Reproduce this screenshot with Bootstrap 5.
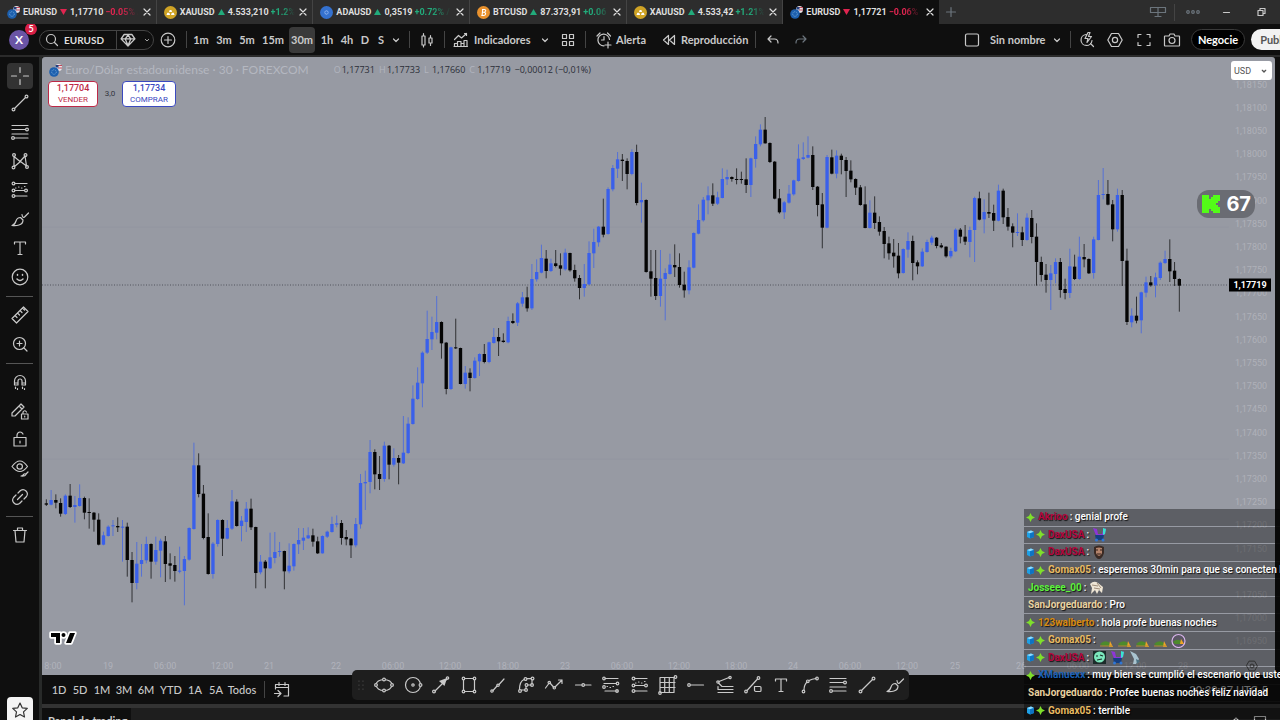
<!DOCTYPE html>
<html lang="es">
<head>
<meta charset="utf-8">
<meta name="viewport" content="width=device-width, initial-scale=1">
<title>EURUSD 1,17721</title>
<link href="https://cdn.jsdelivr.net/npm/bootstrap@5.3.0/dist/css/bootstrap.min.css" rel="stylesheet">
<style>
:root{--ink:#0f0f0f;--panel:#1e1e1e;--fg:#c9c9c9;--chart:#979aa3}
body{font-family:Roboto,"Open Sans",sans-serif;background:var(--ink);color:var(--fg);font-size:10px;line-height:14px}
button,select{font:inherit;color:inherit;background:none;border:0;padding:0}
.ic{width:24px;height:24px;fill:none;stroke:currentColor;stroke-width:1.2;stroke-linecap:round;stroke-linejoin:round;flex:none;display:block}
.ic .f{fill:currentColor;stroke:none}
/* window tabs */
.tabbar{height:24px;background:#2d2d2d}
.tabset{flex:0 1 939px;min-width:0}
.wtab{flex:1 1 0;min-width:0;font-size:9px;font-weight:700;color:#dedede;padding:0 2px 0 7px;border-right:1px solid #444;white-space:nowrap}
.wtab.on{background:var(--ink);border:0}
.coin{width:13px;height:13px;flex:none;margin-right:3px}
.tri{width:7px;height:6px;flex:none;margin:0 3px}
.pct{flex:1 1 0;min-width:0;overflow:hidden;margin-left:2px;-webkit-mask-image:linear-gradient(90deg,#000 45%,transparent 96%);mask-image:linear-gradient(90deg,#000 45%,transparent 96%)}
.up{color:#22ab7b}.dn{color:#e02550}
.closer{width:14px}
.closer .ic{width:14px;height:14px}
/* main toolbar */
.topbar{height:33px;border-bottom:2px solid #2b2b2b;font-size:11px;font-weight:700;font-family:Lato,Roboto,sans-serif;white-space:nowrap;overflow:hidden}
.tool{display:flex;align-items:center;justify-content:center;height:26px;flex:none;border-radius:4px}
.tool.start{justify-content:flex-start}
.tool.on{background:#3a3a3a;margin:0 1px}
.w14{width:14px}.w16{width:16px}.w18{width:18px}.w20{width:20px}.w22{width:22px}.w24{width:24px}.w26{width:26px}.w28{width:28px}.w30{width:30px}.w41{width:41px}.w58{width:58px}.w70{width:70px}
.sep{flex:none;display:flex;justify-content:center}
.sep::before{content:"";width:1px;height:17px;background:#444}
.s8{width:8px}.s10{width:10px}.s14{width:14px}
.avatar{width:20px;height:20px;border-radius:50%;background:#6a54a5;color:#fff;font-size:12px;margin:0 10px 0 9px}
.count{top:-7px;left:16px;width:12px;height:12px;border-radius:50%;background:#d81e45;font-size:9px;line-height:12px}
.search{width:115px;height:20px;border:1px solid #444;border-radius:10px}
.search input{width:52px;background:none;border:0;color:#dedede;font:inherit;font-size:10px;padding:0}
.split{border-left:1px solid #444;height:18px;width:40px}
.trade{width:54px;height:21px;border:1px solid #3a3a3a;border-radius:11px;background:#000;color:#fff;margin-left:5px}
.publish{width:58px;height:21px;border-radius:11px;background:#f2f2f2;color:#555;margin-left:6px;flex:none}
.rightset{flex:none;width:320px}
/* drawing rail */
.rail{width:42px;flex:none;border-right:3px solid #282a29;padding-top:6px}
.rail .grp{display:flex;flex-direction:column;align-items:center}
.rail .grp button{flex:1 1 0;width:26px;display:flex;align-items:center;justify-content:center;border-radius:4px}
.rail .grp button.on{background:#333;flex:0 0 26px}
.g8{height:228px}.g2{height:57px}.g5{height:143px}.g1{height:28px}
.rail hr{width:27px;height:1px;margin:5px auto 4px;border:0;background:#555;opacity:1}
.star{width:26px;height:26px;border-radius:4px;background:#f4f4f4;color:#333;margin:0 auto -3px;flex:none}
/* chart */
.chart{background:var(--chart);margin-right:5px;border-radius:3px 3px 0 0}
.chart .plot{width:100%;height:100%;display:block;position:absolute;inset:0}
.legend{left:7px;top:5px;height:16px;font:500 9px/14px "Open Sans",sans-serif}
.legend .ttl{font:12px/14px Lato,sans-serif;color:#b4b7c0;margin:0 25px 0 0}
.legend .v{color:#2b2e38;margin-right:4px}
.legend .k{color:#b2b5bf;width:8px}
.quote{left:6px;top:24px}
.quote button{height:26px;background:#fff;border-radius:4px;border:1px solid;line-height:11px;font-size:8px}
.quote button b{display:block;font-size:9px;font-weight:500}
.sell{color:#bd2946;width:50px}.buy{color:#3a49bf;width:54px}
.quote span{width:24px;font-size:8px;color:#33363f}
.scale{right:1px;top:16px;bottom:22px;width:46px;color:#afb1b9;font-size:9px}
.scale span{flex:1 1 0;display:flex;align-items:center;justify-content:center}
.times{left:0;right:0;bottom:2px;height:14px;color:#b0b2bb;font-size:9px;overflow:hidden}
.times span{position:absolute;transform:translateX(-50%)}
.last{right:4px;transform:translateY(-50%);width:42px;height:13px;line-height:13px;background:#000;color:#fff;font-weight:700;font-size:9px}
.cur{right:3px;top:4px;width:41px;height:19px;background:#fff;border-radius:3px;color:#555;font-size:9px}
.cur select{appearance:none;width:100%;height:100%;padding-left:3px}
.cur .ic{right:0;top:2px;width:16px;height:16px;stroke-width:2;pointer-events:none}
.viewers{right:20px;top:133px;width:58px;height:28px;border-radius:12px;background:#6a6c73;color:#fff;font:700 20px Inter,sans-serif}
.tvlogo{left:6px;bottom:28px;width:29px;height:18px}
.gear{right:14px;bottom:-3px;color:#444}
.gear .ic{width:18px;height:24px}
/* bottom */
.ranges{height:29px;font-size:11px;font-weight:500;font-family:Lato,Roboto,sans-serif;padding-left:7px}
.clock{color:#aaa;margin-right:12px;font-size:11px}
.under{height:16px;border-top:4px solid #333;background:var(--panel);overflow:hidden}
.under button{height:24px}
.under .dock{width:89px;background:var(--ink);font:700 11px Lato,sans-serif;padding-left:6px;color:#ccc}
.favs{left:352px;bottom:20px;width:557px;height:30px;background:var(--panel);border-radius:5px}
.favs button{flex:1 1 0;display:flex;justify-content:center}
.favs .grip{width:18px;color:#555}
/* live chat */
.chat{right:0;bottom:0;width:256px;height:211px;color:#fff;font-weight:500;font-size:10px;overflow:hidden;text-shadow:1px 1px 1px rgba(0,0,0,.8)}
.chat li{flex:1 1 0;min-height:0;display:flex;align-items:center;white-space:nowrap;background:rgba(0,0,0,.38);border-bottom:1px solid transparent;background-clip:padding-box;padding-left:2px}
.chat .ic{width:9px;height:9px;stroke:none;margin-right:1px}
.chat .who{margin-left:2px;font-weight:700}
.chat .who+span{margin-left:2px}
.chat .emo{width:15px;height:15px;flex:none;margin-left:3px}
.red{color:#b3063f}.gold{color:#e8bb62}.lime{color:#5cf23c}.cream{color:#e9d2a0}.orange{color:#d78a10}.azure{color:#1b62b8}
</style>
</head>
<body class="vh-100 overflow-hidden d-flex flex-column position-relative">

<svg class="d-none" aria-hidden="true">
 <symbol id="x" viewBox="0 0 14 14"><path d="M4 4l6 6M10 4l-6 6"/></symbol>
 <symbol id="chev" viewBox="0 0 24 24"><path d="M9.500 11l2.500 2.500L14.500 11"/></symbol>
 <symbol id="search" viewBox="0 0 24 24"><circle cx="11" cy="11" r="4.500"/><path d="M14.500 14.500L17.500 17.500"/></symbol>
 <symbol id="gem" viewBox="2 2 20 20"><path d="M8.500 7h7l2.800 4-6.300 6.500L5.700 11zM6 11h12M9.500 11l2.500 6 2.500-6-2.500-3.500z"/></symbol>
 <symbol id="plus" viewBox="0 0 24 24"><circle cx="12" cy="12" r="6.800"/><path d="M12 8.500v7M8.500 12h7"/></symbol>
 <symbol id="add" viewBox="0 0 24 24"><path d="M12 7.500v9M7.500 12h9"/></symbol>
 <symbol id="candles" viewBox="0 0 24 24"><path d="M7 8h3v9H7zM8.500 5.500V8M8.500 17v2M14 10h3v5h-3zM15.500 7.500V10M15.500 15v2.500"/></symbol>
 <symbol id="ind" viewBox="0 0 24 24"><path d="M5.500 18.500v-3h3v3M8.500 18.500v-5h3.500v5M12 18.500v-3h3v3M15 18.500v-6h3v6M5 18.500h13.500M5.500 11.500l4-4 3 2.500 5-4.500M15.500 5.500h2v2"/></symbol>
 <symbol id="grid4" viewBox="0 0 24 24"><path d="M6.500 6.500h4v4h-4zM13.500 6.500h4v4h-4zM6.500 13.500h4v4h-4zM13.500 13.500h4v4h-4z"/></symbol>
 <symbol id="alarm" viewBox="0 0 24 24"><path d="M17.500 11.500A5.800 5.800 0 1 0 12 17.800M12 8.500V12H9.500M5 8l3-3M15.500 5l3 3M16 14v6M13 17h6"/></symbol>
 <symbol id="replay" viewBox="0 0 24 24"><path d="M11.500 7.500v9L6.500 12zM17.500 7.500v9L12.500 12z"/></symbol>
 <symbol id="undo" viewBox="0 0 24 24"><path d="M10 8l-3 3 3 3M7 11h6.500q3.500 0 3.500 4"/></symbol>
 <symbol id="redo" viewBox="0 0 24 24"><path d="M14 8l3 3-3 3M17 11h-6.500Q7 11 7 15"/></symbol>
 <symbol id="square" viewBox="0 0 24 24"><rect x="5.500" y="6" width="13" height="12" rx="1.500"/></symbol>
 <symbol id="quick" viewBox="0 0 24 24"><path d="M11 6.500a5.500 5.500 0 1 0 6 6M15.500 15.500l3 3M13 4.500l-3 6h3l-1 4 4.500-6h-3l1.500-4z"/></symbol>
 <symbol id="hexset" viewBox="0 0 24 24"><path d="M8.500 5.500h7l3.700 6.500-3.700 6.500h-7L4.800 12z"/><circle cx="12" cy="12" r="2.600"/></symbol>
 <symbol id="full" viewBox="0 0 24 24"><path d="M6 9.500V6.500h3M15 6.500h3v3M18 14.500v3h-3M9 17.500H6v-3"/></symbol>
 <symbol id="cam" viewBox="0 0 24 24"><path d="M5 8h4l1-2h4l1 2h4q.5 0 .5.500v9q0 .5-.5.500H5q-.5 0-.5-.5v-9Q4.500 8 5 8z"/><circle cx="12" cy="12.500" r="3"/></symbol>
 <symbol id="cross" viewBox="0 0 24 24"><path d="M12 3.500v5M12 15.500v5M3.500 12h5M15.500 12h5"/></symbol>
 <symbol id="line" viewBox="0 0 24 24"><path d="M6.500 17.500l11-11"/><circle cx="5.500" cy="18.500" r="1.400"/><circle cx="18.500" cy="5.500" r="1.400"/></symbol>
 <symbol id="lines" viewBox="0 0 24 24"><path d="M4 5.500h16M4 9.500h13.500M4 14h16M6.500 18h13.500"/><circle cx="19" cy="9.500" r="1.400"/><circle cx="5" cy="18" r="1.400"/></symbol>
 <symbol id="xabcd" viewBox="0 0 24 24"><path d="M6 17V7.500l6 5 5-5.500 1.500 10-6-4.500L6.500 17.500"/><circle cx="6" cy="6" r="1.400"/><circle cx="5.500" cy="18.500" r="1.400"/><circle cx="17.500" cy="6" r="1.400"/><circle cx="19" cy="18" r="1.400"/></symbol>
 <symbol id="fibch" viewBox="0 0 24 24"><path d="M7 5.500h12M6.500 12.500h10M7 18h12M7.500 10h.5M10.500 9h.5M13.500 10h.5M16.500 8.500h.5"/><circle cx="5.500" cy="5.500" r="1.400"/><circle cx="5.500" cy="12.500" r="1.400"/><circle cx="5.500" cy="18" r="1.400"/><circle cx="18" cy="12.500" r="1.400"/></symbol>
 <symbol id="brush" viewBox="0 0 24 24"><path d="M4 18.500q3-1 4-4.500 1-3.500 4.500-3.500l2.500 2.500q0 4-4 5-3 1-7 .5M14 7.500q.5 4 2.500 2.500L20.500 6"/></symbol>
 <symbol id="txt" viewBox="0 0 24 24"><path d="M6.500 8V6h11v2M12 6v12M10 18.500h4"/></symbol>
 <symbol id="smile" viewBox="0 0 24 24"><circle cx="12" cy="12" r="7.800"/><path d="M9 14q3 3 6 0M9.500 9.500v.8M14.500 9.500v.8" stroke-width="1.500"/></symbol>
 <symbol id="ruler" viewBox="0 0 24 24"><path d="M4 15.500L15.500 4l4.500 4.500L8.500 20zM7 12.500l2 2M9.500 10l2 2M12 7.500l2 2M14.500 5l2 2"/></symbol>
 <symbol id="zoom" viewBox="0 0 24 24"><circle cx="11.500" cy="11.500" r="6"/><path d="M16 16l3 3M11.500 9v5M9 11.500h5"/></symbol>
 <symbol id="magnet" viewBox="0 0 24 24"><path d="M6.500 15v-4a5.500 5.500 0 0 1 11 0v4h-3.500v-4a2 2 0 0 0-4 0v4zM6.500 13H10M14 13h3.500M7.500 17v1.500M9.500 18.500v1M14.500 17v1.500M16.500 18.500v1"/></symbol>
 <symbol id="penlock" viewBox="0 0 24 24"><path d="M4 14L13 5l3 3-9 9H4zM11 7l3 3M13.500 15h6.500v5h-6.500zM15 15v-2q1.500-2.500 3.500 0M16.700 17v1"/></symbol>
 <symbol id="lock" viewBox="0 0 24 24"><path d="M6 10.500h12v8.500H6zM9 10.500V8q.5-3 3-3 2 0 3 2M12 14v2" /></symbol>
 <symbol id="eye" viewBox="0 0 24 24"><path d="M4 10.500q8-11 15.500 0-7.500 10-15.500 0z"/><circle cx="11.700" cy="10.500" r="2.700"/><path d="M13 20q2 0 2.500-1.500 1.500-1.500 2.500 0-1 2-5 1.500M18 18l2-2"/></symbol>
 <symbol id="link" viewBox="0 0 24 24"><path d="M10 8l2.500-2.500q3-2 5.500.5t.5 5.500L16 14M14 16l-2.500 2.500q-3 2-5.500-.5t-.5-5.500L8 10M9.500 14.500l5-5"/></symbol>
 <symbol id="trash" viewBox="0 0 24 24"><path d="M5.500 7.500h13M9.500 7V5h5v2M7 7.500l1 11.500h8l1-11.500"/></symbol>
 <symbol id="starr" viewBox="0 0 24 24"><path d="M12 5l2.200 4.800 5.100.6-3.800 3.500 1 5.100-4.500-2.500L7.500 19l1-5.100-3.800-3.500 5.100-.6z"/></symbol>
 <symbol id="ell" viewBox="0 0 24 24"><ellipse cx="12" cy="12" rx="8" ry="5.500"/><circle cx="12" cy="6.500" r="1.400" fill="#1e1e1e"/><circle cx="12" cy="17.500" r="1.400" fill="#1e1e1e"/><circle cx="4" cy="12" r="1.400" fill="#1e1e1e"/><circle cx="20" cy="12" r="1.400" fill="#1e1e1e"/></symbol>
 <symbol id="circ" viewBox="0 0 24 24"><circle cx="12" cy="12" r="7.500"/><circle cx="12" cy="12" r="1.200"/><circle cx="19.500" cy="12" r="1.400" fill="#1e1e1e"/></symbol>
 <symbol id="arrow" viewBox="0 0 24 24"><path d="M6 18l12-12"/><path d="M18 5l-2.500 8-5.500-5z" fill="currentColor" stroke="none"/><circle cx="5" cy="18.500" r="1.400"/><circle cx="18.500" cy="5" r="1.200"/></symbol>
 <symbol id="rct" viewBox="0 0 24 24"><path d="M6.500 7v10M17.500 7v10M8 5.500h8M8 18.500h8"/><circle cx="6.500" cy="5.500" r="1.300"/><circle cx="17.500" cy="5.500" r="1.300"/><circle cx="6.500" cy="18.500" r="1.300"/><circle cx="17.500" cy="18.500" r="1.300"/></symbol>
 <symbol id="info" viewBox="0 0 24 24"><path d="M7 17.500l4-4.500M13 11.500L18 6"/><circle cx="6" cy="18" r="1.200"/><circle cx="12" cy="12.300" r="1.200"/></symbol>
 <symbol id="pathx" viewBox="0 0 24 24"><path d="M10 6.500q-4.500 2-4.500 10M13 5.700h4M18 7v4M17 12h-3M12 13.500v2M11 17H7.500"/><circle cx="11.500" cy="6" r="1.400"/><circle cx="18.500" cy="5.500" r="1.400"/><circle cx="18" cy="12" r="1.400"/><circle cx="12.500" cy="12" r="1.400"/><circle cx="12" cy="17" r="1.400"/><circle cx="6" cy="18" r="1.400"/></symbol>
 <symbol id="zig" viewBox="0 0 24 24"><path d="M3.500 15l3-4M8 10l3.500 4M13 14l7-7M16.500 7H20v3.500"/><circle cx="7.300" cy="9.500" r="1.200"/><circle cx="12.300" cy="14.800" r="1.200"/></symbol>
 <symbol id="hline" viewBox="0 0 24 24"><path d="M4.500 12H11M13.500 12H20"/><circle cx="12.200" cy="12" r="1.300"/></symbol>
 <symbol id="fib2" viewBox="0 0 24 24"><path d="M6 5.500h13M5 10.500h12M6 18h13M8 13.500h.5M11 14.500h.5M14 13.500h.5"/><circle cx="5" cy="5.500" r="1.300"/><circle cx="18.500" cy="10.500" r="1.300"/><circle cx="5" cy="14" r="1.300"/><circle cx="18" cy="18" r="1.300"/></symbol>
 <symbol id="gann" viewBox="0 0 24 24"><path d="M4 4.500h14v15H4zM4 9.500h15M4 14.500h15M8.700 4.500v15M13.300 4.500v15"/><circle cx="19.500" cy="4" r="1.300"/><circle cx="4" cy="20" r="1.300"/></symbol>
 <symbol id="ray" viewBox="0 0 24 24"><path d="M6.500 12H19.500"/><circle cx="5" cy="12" r="1.300"/></symbol>
 <symbol id="fan" viewBox="0 0 24 24"><path d="M6 8.500l10-4M5.500 10l3.500 3.500h11M5 13.500v3h15M5 19.500h15"/><circle cx="5" cy="9" r="1.200"/><circle cx="17" cy="4.500" r="1.200"/></symbol>
 <symbol id="shp" viewBox="0 0 24 24"><path d="M6 17.500L16.500 6M13.500 13.500h5.500q1 0 1 1v3q0 1-1 1h-4q-1 0-1.500-1z"/><circle cx="5" cy="18.500" r="1.300"/><circle cx="17.500" cy="5" r="1.300"/></symbol>
 <symbol id="curve" viewBox="0 0 24 24"><path d="M6 17q0-5 3-8M11 7.500Q14 6 18 5.500"/><circle cx="5.500" cy="18.500" r="1.300"/><circle cx="9.800" cy="8.300" r="1.300"/><circle cx="19" cy="5.500" r="1.300"/></symbol>
 <symbol id="cal" viewBox="0 0 24 24"><path d="M5.500 11V6.500h13V18H14M5.500 9.500h13M9 4.500v3M15 4.500v3M4.500 15.500h6M8 12.500l3 3-3 3"/></symbol>
 <symbol id="mon" viewBox="0 0 24 24"><path d="M4.500 7.500h15v5h-15zM12 7.500v9M9 16.500h6"/></symbol>
 <symbol id="dots" viewBox="0 0 24 24"><circle cx="7" cy="12" r="1.300"/><circle cx="12" cy="12" r="1.300"/><circle cx="17" cy="12" r="1.300"/></symbol>
 <symbol id="eurus" viewBox="0 0 13 13"><circle cx="9.500" cy="3.500" r="3.500" fill="#e9e4e8"/><path d="M9 1.500h4M9 4h4" stroke="#c2495b" stroke-width="1.100"/><path d="M6.500 1h3v2.500h-3z" fill="#24407e"/><circle cx="5" cy="8" r="4.800" fill="#1c5fae"/><circle cx="5" cy="8" r="2.300" fill="none" stroke="#76a9d8" stroke-width=".9" stroke-dasharray="1 .8"/></symbol>
 <symbol id="gold" viewBox="0 0 13 13"><circle cx="6.500" cy="6.500" r="6.500" fill="#cfa325"/><path d="M5 6l.7-2h1.700l.7 2zM2.500 9l.8-2.300h2l.8 2.300zM7 9l.8-2.300h2l.8 2.300z" fill="#fff"/></symbol>
 <symbol id="ada" viewBox="0 0 13 13"><circle cx="6.500" cy="6.500" r="6.500" fill="#3471cf"/><circle cx="6.500" cy="6.500" r="1.700" fill="none" stroke="#bcd5ff" stroke-dasharray="1 .6"/></symbol>
 <symbol id="btc" viewBox="0 0 13 13"><circle cx="6.500" cy="6.500" r="6.500" fill="#e9922e"/><path d="M5 3.500h2.300q1.700.2 1.300 1.700-.3 1-1.600 1.100 1.800.1 1.600 1.700-.3 1.500-2 1.500H4.300M5.700 3.500l-.6 6M5.300 6.300h2" fill="none" stroke="#fff" stroke-width="1.100"/></symbol>
 <symbol id="spark" viewBox="0 0 9 9"><path d="M4.500 0L6 3l3 1.500L6 6 4.500 9 3 6 0 4.500 3 3z" fill="#7fe02b"/></symbol>
 <symbol id="cube" viewBox="0 0 9 9"><path d="M1 2l4-1.500L8 2v5L4 8.500 1 7z" fill="#1ea0e6"/><path d="M1 2l3 1.300L8 2 5 .5z" fill="#8fdcff"/><path d="M4 3.300L8 2v5L4 8.500z" fill="#0e74c4"/></symbol>
 <symbol id="e1" viewBox="0 0 15 15"><path d="M1 1l4 1 1 5h4l1-4 3-2-1 6-3 3H5L3 6z" fill="#8d35d8"/><path d="M11 1l3 1-1 5-2 1z" fill="#39e3d0"/><path d="M3 8h9l-1 5H4z" fill="#173f80"/><circle cx="4.500" cy="13" r="1.500" fill="#2f77d6"/><circle cx="11" cy="13" r="1.500" fill="#2f77d6"/></symbol>
 <symbol id="e2" viewBox="0 0 15 15"><path d="M2 2q5-3 10 0v6q-2 6-5 6T2 8z" fill="#3a2a24"/><path d="M4 3q3-1 6 0v5q-1 3-3 3T4 8z" fill="#b5846c"/><path d="M4 5h2M8 5h2M5 9h4" stroke="#33211b"/></symbol>
 <symbol id="e3" viewBox="0 0 15 15"><path d="M1 4q4-4 8-1l5 4-1 6-3-3-2 4-2-4-4 4 1-6z" fill="#efe6d5"/><path d="M3 5l6 1M5 8l6 1M8 3l4 5" stroke="#8a7560" stroke-width=".8"/></symbol>
 <symbol id="e4" viewBox="0 0 15 15"><path d="M1 11q5-5 10-1l1 3H4z" fill="#4d8a2c"/><path d="M11 8l3 6h-4z" fill="#f0a427"/><path d="M1 13h12" stroke="#b48b32"/></symbol>
 <symbol id="e7" viewBox="0 0 15 15"><circle cx="7.500" cy="8" r="6.500" fill="#5a5664" stroke="#d9b4ec" stroke-width="1.200"/><path d="M2 9q4-4 8-1l1 3H4z" fill="#4d8a2c"/><path d="M10 6l3 5h-4z" fill="#f0a427"/></symbol>
 <symbol id="e5" viewBox="0 0 15 15"><path d="M1 1h13v13H1z" fill="#1b2b2a"/><circle cx="7.500" cy="7" r="5.500" fill="#7be7bd"/><path d="M4 6h2M8 5l3 1M5 10l5-1" stroke="#1a2d2a" stroke-width="1.200"/></symbol>
 <symbol id="e6" viewBox="0 0 15 15"><path d="M2 1l6 3 3 5-3 5H5l1-5z" fill="#a9c3cf"/><path d="M8 9l4 2-3 3z" fill="#4b7384"/></symbol>
</svg>

<header class="tabbar d-flex flex-shrink-0">
 <nav class="tabset d-flex" id="tabs"></nav>
 <button class="tool w24 h-100 text-secondary" aria-label="Nueva pestaña"><svg class="ic"><use href="#add"/></svg></button>
 <div class="ms-auto d-flex align-items-center">
  <button class="tool w24 text-secondary" aria-label="Monitores"><svg class="ic"><use href="#mon"/></svg></button>
  <span class="sep s8"></span>
  <button class="tool w30 text-secondary" aria-label="Más"><svg class="ic"><use href="#dots"/></svg></button>
  <button class="tool w30 ms-1" aria-label="Minimizar"><svg class="ic" viewBox="0 0 24 24"><path d="M8.500 12.500h6"/></svg></button>
  <button class="tool w30 ms-1 me-1" aria-label="Restaurar"><svg class="ic" viewBox="0 0 24 24" stroke-width="1.500"><path d="M9 10.500h5v5H9zM11 10V8.500h5V13.500h-1.500"/></svg></button>
 </div>
</header>

<div class="topbar d-flex align-items-center flex-shrink-0">
 <button class="avatar position-relative flex-shrink-0">X<span class="count position-absolute">5</span></button>
 <div class="search d-flex align-items-center flex-shrink-0"><svg class="ic"><use href="#search"/></svg><input value="EURUSD" aria-label="Símbolo"><button class="split d-flex align-items-center" aria-label="Filtro"><svg class="ic w22"><use href="#gem"/></svg><svg class="ic w16"><use href="#chev"/></svg></button></div>
 <button class="tool w28" aria-label="Añadir"><svg class="ic"><use href="#plus"/></svg></button><span class="sep s8"></span>
 <button class="tool w22">1m</button><button class="tool w24">3m</button><button class="tool w22">5m</button><button class="tool w30">15m</button><button class="tool w26 on">30m</button><button class="tool w22">1h</button><button class="tool w18">4h</button><button class="tool w18">D</button><button class="tool w14">S</button><button class="tool w16"><svg class="ic"><use href="#chev"/></svg></button>
 <span class="sep s10"></span><button class="tool w26"><svg class="ic"><use href="#candles"/></svg></button><span class="sep s8"></span>
 <button class="tool w26"><svg class="ic"><use href="#ind"/></svg></button><button class="tool start w58">Indicadores</button><button class="tool w26"><svg class="ic"><use href="#chev"/></svg></button><button class="tool w20"><svg class="ic"><use href="#grid4"/></svg></button><span class="sep s14"></span>
 <button class="tool w24"><svg class="ic"><use href="#alarm"/></svg></button><button class="tool start w41">Alerta</button><button class="tool w24"><svg class="ic"><use href="#replay"/></svg></button><button class="tool start w70">Reproducción</button><span class="sep s8"></span>
 <button class="tool w28"><svg class="ic"><use href="#undo"/></svg></button><button class="tool w28 text-secondary"><svg class="ic"><use href="#redo"/></svg></button>
 <div class="rightset ms-auto d-flex align-items-center overflow-hidden">
  <button class="tool w30 start"><svg class="ic"><use href="#square"/></svg></button><button class="tool start w58">Sin nombre</button><button class="tool w18"><svg class="ic"><use href="#chev"/></svg></button><span class="sep s8"></span>
  <button class="tool w26"><svg class="ic"><use href="#quick"/></svg></button><button class="tool w30"><svg class="ic"><use href="#hexset"/></svg></button><button class="tool w28"><svg class="ic"><use href="#full"/></svg></button><button class="tool w28"><svg class="ic"><use href="#cam"/></svg></button>
  <button class="trade flex-shrink-0">Negocie</button><button class="publish">Publicar</button>
 </div>
</div>

<div class="d-flex flex-grow-1 overflow-hidden">
 <aside class="rail d-flex flex-column">
  <div class="grp g8" data-icons="cross line lines xabcd fibch brush txt smile"></div><hr>
  <div class="grp g2" data-icons="ruler zoom"></div><hr>
  <div class="grp g5" data-icons="magnet penlock lock eye link"></div><hr>
  <div class="grp g1" data-icons="trash"></div>
  <button class="star mt-auto d-flex align-items-center justify-content-center" aria-label="Favoritos"><svg class="ic"><use href="#starr"/></svg></button>
 </aside>
 <main class="flex-grow-1 d-flex flex-column overflow-hidden">
  <section class="chart flex-grow-1 position-relative">
   <svg class="plot" id="plot" viewBox="0 0 3699 1854" preserveAspectRatio="none"></svg>
   <div class="legend position-absolute d-flex align-items-center"><svg class="coin"><use href="#eurus"/></svg><span class="ttl">Euro/Dólar estadounidense · 30 · FOREXCOM</span><span class="k">O</span><span class="v">1,17731</span><span class="k">H</span><span class="v">1,17733</span><span class="k">L</span><span class="v">1,17660</span><span class="k">C</span><span class="v">1,17719</span><span class="v">−0,00012 (−0,01%)</span></div>
   <div class="quote position-absolute d-flex align-items-center text-center"><button class="sell"><b>1,17704</b>VENDER</button><span>3,0</span><button class="buy"><b>1,17734</b>COMPRAR</button></div>
   <div class="scale position-absolute d-flex flex-column" id="scale"></div>
   <div class="times position-absolute" id="times"></div>
   <div class="last position-absolute text-center" id="last">1,17719</div>
   <div class="cur position-absolute"><select aria-label="Moneda"><option>USD</option></select><svg class="ic position-absolute"><use href="#chev"/></svg></div>
   <div class="viewers position-absolute d-flex align-items-center justify-content-between px-1"><svg width="20" height="20" viewBox="0 0 20 20" fill="#53fc18"><path d="M1 1h7v4h2V3h2V1h7v6h-2v2h-2v2h2v2h2v6h-7v-2h-2v-2H8v4H1z"/></svg>67</div>
   <svg class="tvlogo position-absolute" viewBox="0 0 29 18"><g stroke="#fff" stroke-width="3.500" stroke-linejoin="round"><path d="M3 4h9v10H8V8H3zM18 14l4-10h5l-4 10z"/><circle cx="15.500" cy="6" r="2"/></g><path d="M3 4h9v10H8V8H3zM18 14l4-10h5l-4 10z"/><circle cx="15.500" cy="6" r="2"/></svg>
   <button class="gear position-absolute" aria-label="Ajustes"><svg class="ic"><use href="#hexset"/></svg></button>
  </section>
  <div class="ranges d-flex align-items-center flex-shrink-0">
   <button class="tool w20">1D</button><button class="tool w22">5D</button><button class="tool w22">1M</button><button class="tool w22">3M</button><button class="tool w22">6M</button><button class="tool w28">YTD</button><button class="tool w20">1A</button><button class="tool w22">5A</button><button class="tool w30">Todos</button><span class="sep s14"></span><button class="tool w22" aria-label="Ir a la fecha"><svg class="ic"><use href="#cal"/></svg></button>
   <button class="clock ms-auto">20:39:27 UTC-5</button>
  </div>
  <div class="under d-flex flex-shrink-0"><button class="dock text-start">Panel de trading</button>
   <button class="ms-auto" aria-label="Abrir panel"><svg class="ic" viewBox="0 0 24 24"><path d="M9 13l3-3 3 3"/></svg></button><button class="me-2" aria-label="Maximizar panel"><svg class="ic" viewBox="0 0 24 24"><path d="M6.500 8.500h11v9h-11z"/></svg></button></div>
 </main>
</div>

<div class="favs position-absolute d-flex align-items-center"><span class="grip d-flex justify-content-center"><svg class="ic" viewBox="0 0 24 24" stroke-width="2"><path d="M10 8v.1M10 12v.1M10 16v.1M14 8v.1M14 12v.1M14 16v.1"/></svg></span>
 <div class="d-flex flex-grow-1" data-icons="ell circ arrow rct info pathx zig hline fib2 fibch gann ray fan shp txt curve lines line brush"></div>
</div>

<ul class="chat position-absolute d-flex flex-column list-unstyled mb-0" id="chat"></ul>

<script src="https://cdn.jsdelivr.net/npm/bootstrap@5.3.0/dist/js/bootstrap.bundle.min.js"></script>
<script>
const $ = id => document.getElementById(id);

$('tabs').innerHTML = [
 ['eurus','EURUSD',0,'1,17710','−0.05% /'],['gold','XAUUSD',1,'4.533,210','+1.2%'],['ada','ADAUSD',1,'0,3519','+0.72% /'],
 ['btc','BTCUSD',1,'87.373,91','+0.06'],['gold','XAUUSD',1,'4.533,42','+1.21%'],['eurus','EURUSD',0,'1,17721','−0.06%']
].map(([ico,n,up,p,c],i)=>`<div class="wtab d-flex align-items-center ${i==5?'on':''}"><svg class="coin"><use href="#${ico}"/></svg>${n}<svg class="tri ${up?'up':'dn'}" viewBox="0 0 7 6" fill="currentColor"><path d="${up?'M0 6L3.500 0 7 6z':'M0 0h7L3.500 6z'}"/></svg>${p}<span class="pct ${up?'up':'dn'}">${c}</span><button class="closer" aria-label="Cerrar"><svg class="ic"><use href="#x"/></svg></button></div>`).join('');

document.querySelectorAll('[data-icons]').forEach(g=>{
 g.innerHTML = g.dataset.icons.split(' ').map(n=>`<button class="${n=='cross'?'on':''}" aria-label="${n}"><svg class="ic"><use href="#${n}"/></svg></button>`).join('');
});

// bars: direction, body top, body bottom, high, low; one block per stretch with its own baseline
const blocks = [
[1119,`d220 224 208 228,u210 224 180 226,d210 218 193 235,d219 251 205 260,u197 252 193 255,d197 231 162 234,u225 231 198 278,u204 228 163 230,d204 248 200 268,d246 248 205 296,d248 269 246 305,d269 344 250 346,u316 344 305 346,u290 318 286 320,u286 288 270 318,d288 292 262 306,u290 292 270 395,d290 390 278 440,d390 459 366 517,u401 459 336 478,u390 402 342 440,u342 391 320 400,d342 395 340 446,u360 395 320 404,u332 362 326 442,d334 402 318 456,d400 407 370 448,d405 423 378 455,u422 424 350 430,u387 423 378 526,u294 389 292 392,u106 297 38 299,d106 192 70 202,d191 324 165 328,d321 432 250 434,u341 432 336 446,u270 342 268 350,d270 326 268 378,u294 326 270 328,u214 296 180 300,d215 288 208 290,u272 288 258 334,u236 276 216 306,d236 292 206 300,d291 429 290 475,u395 427 375 433,d395 415 390 475,u382 415 308 417,u366 384 306 400,u363 366 336 380,d363 424 362 478,u407 424 340 430,u342 409 340 422,u330 343 294 372,u323 332 294 360,u316 325 292 327,d316 335 296 350,d334 370 320 372,u318 370 316 371,u305 320 302 324,u282 306 260 308,u280 284 256 292,d279 324 270 344,d321 328 300 346,d326 346 324 384,u282 346 264 352,u159 283 132 296,u156 160 122 240,u66 156 30 190`],
[219,`d966 1033 958 1078,d1032 1047 978 1080,u947 1047 935 1055,d947 1004 945 1048,u984 1004 955 1010,d984 998 975 1063,u968 1000 858 1002,u881 969 862 972,u806 882 766 884,u758 807 712 810,u668 760 664 832,u627 668 542 672,u606 628 560 660,u576 608 498 628,d576 640 574 686,d638 777 636 793,u652 777 650 780,d652 655 566 657,d654 762 653 763,u728 762 708 776,d728 744 715 784,u692 744 682 746,u672 694 670 738,d672 696 642 700,u637 696 635 700,u621 639 594 641,d621 634 594 678,d632 636 610 638,u573 637 560 640,d573 579 550 582,u520 578 516 588,u502 521 486 530,d502 535 470 545,u447 535 402 540,u426 448 388 455,u384 428 344 430,d386 423 360 445,u400 423 386 426,d400 408 360 412,d406 416 370 436,u368 418 356 422,d369 421 368 425,d420 445 404 455,d444 474 435 508,u462 474 402 500,u369 463 334 465,u336 370 296 414,u290 337 288 350,d290 314 206 322,u177 312 172 314,u114 178 105 184,u88 116 66 144,d89 93 72 153,d93 132 85 178,u66 132 58 136,d66 219 44 226,u210 217 158 278,d210 426 208 428,d424 446 360 500,d444 498 360 510,u446 498 360 530`],
[144,`u504 522 490 646,u479 507 446 509,d480 487 418 516,d486 540 445 548,d539 556 500 578,u487 556 466 568,u384 488 382 490,u345 386 298 388,u284 346 276 350,u271 286 244 328,d271 296 235 303,u277 296 260 300,u222 279 190 280,u216 223 194 240,d216 222 214 230,d222 224 190 238,d222 224 200 236,d223 240 160 264,u160 240 158 276,u117 162 94 188,u74 118 58 124,d74 115 36 116,d114 171 112 174,d170 281 168 283,d280 322 252 326,u292 322 288 342,u266 293 240 296,u226 268 224 272,u161 228 118 230,u157 162 112 165,u150 158 94 160,d150 246 124 255,d245 300 243 334,d298 368 264 430,u156 368 150 370,d157 206 134 208,u152 206 136 220,d152 165 146 208,d165 198 156 276,d197 223 166 232,d222 248 220 270,d247 300 240 302,d298 369 244 370,u323 369 286 371,d323 354 274 372,d351 380 334 392,d378 417 366 460,d415 445 395 464,d443 454 402 488,d452 505 414 520,u432 504 430 506,u408 434 382 458,d408 474 392 526,d472 484 466 508,u440 484 430 486,u411 441 404 443,u398 413 392 420,d398 423 396 430,d421 427 414 430,d425 454 424 458,u438 454 428 460,u374 439 370 441`],
[219,`d299 320 294 340,d320 335 285 345,u300 336 290 382,u204 300 200 396,d205 269 185 271,u246 268 208 310,d246 251 188 264,d249 272 224 303,u182 272 164 274,d182 262 176 282,d261 290 234 302,d289 308 280 352,u306 308 250 318,d307 330 290 348,u263 330 250 332,d264 321 240 340,d320 396 280 467,d396 435 380 455,d434 450 402 488,u430 450 405 540,u396 432 385 460,d396 480 384 503,d477 489 446 508,u409 489 356 504,d410 447 374 450,u380 447 320 450,d381 388 342 412,d387 430 385 432,u328 429 320 446,u195 330 150 331,u192 195 114 208,d192 224 150 226,d223 298 210 334,u195 298 176 305,d195 393 180 468,d392 576 356 585,u557 577 535 592,d557 572 500 580,u487 571 485 610,u457 488 440 502,d457 466 438 470,u442 466 428 502,u398 444 394 450,u387 399 362 402,d387 424 328 456,d422 447 396 468,d447 467 445 545`]];
const bars = blocks.flatMap(([base,s])=>s.split(',').map(b=>({up:b[0]=='u',v:b.slice(1).split(' ').map(n=>+n+base)})));
const step = (3412-13)/(bars.length-1);
let out = '<path d="M0 510H3560M0 1206H3560" stroke="#9194a0" stroke-width="2"/><path d="M0 684H3560" stroke="#50535c" stroke-width="3" stroke-dasharray="3 5"/>';
bars.forEach(({up,v:[t,b,h,l]},i)=>{
 const x = 13+i*step, c = up?'#3a60ea':'#050505';
 out += `<path d="M${x} ${h}V${l}" stroke="${c}" stroke-width="3" opacity=".7"/><rect x="${x-5}" y="${t}" width="10" height="${Math.max(3,b-t)}" fill="${c}"/>`;
});
$('plot').innerHTML = out;
$('last').style.top = (684/1854*100)+'%';
$('scale').innerHTML = Array.from({length:25},(_,i)=>`<span>1,${18150-i*50}</span>`).join('');
$('times').innerHTML = [[11,'8:00'],[66,'19'],[123,'06:00'],[180,'12:00'],[227,'21'],[294,'22'],[351,'06:00'],[408,'12:00'],[466,'18:00'],[523,'23'],[580,'06:00'],[637,'12:00'],[694,'18:00'],[751,'24'],[808,'06:00'],[865,'12:00'],[913,'25'],[979,'26'],[1036,'06:00'],[1093,'12:00'],[1141,'28']].map(([x,t])=>`<span style="left:${(x/12.33).toFixed(2)}%">${t}</span>`).join('');

const E = s => s.split(' ').map(n=>`<svg class="emo"><use href="#${n}"/></svg>`).join('');
$('chat').innerHTML = [
 ['s','red','Akrioo','genial profe'],['cs','red','DaxUSA',0,'e1'],['cs','red','DaxUSA',0,'e2'],
 ['cs','gold','Gomax05','esperemos 30min para que se conecten los'],['','lime','Josseee_00',0,'e3'],['','cream','SanJorgeduardo','Pro'],
 ['s','orange','123walberto','hola profe buenas noches'],['cs','gold','Gomax05',0,'e4 e4 e4 e4 e7'],['cs','red','DaxUSA',0,'e5 e1 e6'],
 ['s','azure','XManuexx','muy bien se cumplió el escenario que usted'],['','cream','SanJorgeduardo','Profee buenas noches feliz navidad'],['cs','gold','Gomax05','terrible']
].map(([b,c,n,t,e])=>`<li>${[...b].map(k=>`<svg class="ic"><use href="#${k=='s'?'spark':'cube'}"/></svg>`).join('')}<span class="who ${c}">${n}</span><span>: ${t||''}</span>${e?E(e):''}</li>`).join('');
</script>
</body>
</html>
